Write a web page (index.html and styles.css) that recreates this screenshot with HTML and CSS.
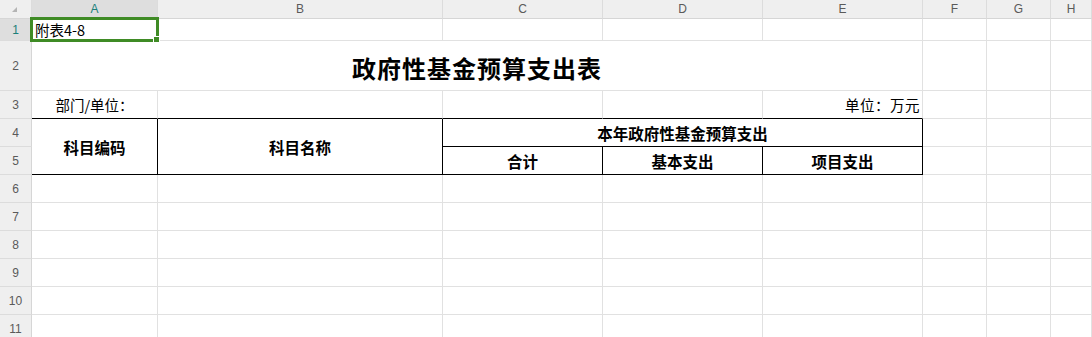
FILE: index.html
```html
<!DOCTYPE html>
<html lang="zh-CN">
<head>
  <meta charset="UTF-8" />
  <title>政府性基金预算支出表</title>
  <link rel="stylesheet" href="styles.css">
</head>
<body>
  <div class="sheet">
    <div class="grid">
      <!-- column headers -->
      <div class="corner"><span class="tri"></span></div>
      <div class="colhead active">A</div>
      <div class="colhead">B</div>
      <div class="colhead">C</div>
      <div class="colhead">D</div>
      <div class="colhead">E</div>
      <div class="colhead">F</div>
      <div class="colhead">G</div>
      <div class="colhead">H</div>

      <!-- row 1 -->
      <div class="rowhead active">1</div>
      <div class="cell left">附表4-8</div>
      <div class="cell"></div><div class="cell"></div><div class="cell"></div><div class="cell"></div>
      <div class="cell"></div><div class="cell"></div><div class="cell"></div>

      <!-- row 2 -->
      <div class="rowhead">2</div>
      <div class="cell title span5">政府性基金预算支出表</div>
      <div class="cell"></div><div class="cell"></div><div class="cell"></div>

      <!-- row 3 -->
      <div class="rowhead">3</div>
      <div class="cell top-edge">部门/单位：</div>
      <div class="cell top-edge"></div>
      <div class="cell top-edge"></div>
      <div class="cell top-edge"></div>
      <div class="cell top-edge right">单位：万元</div>
      <div class="cell"></div><div class="cell"></div><div class="cell"></div>

      <!-- rows 4-5 : table head -->
      <div class="rowhead">4</div>
      <div class="cell th rows2">科目编码</div>
      <div class="cell th rows2">科目名称</div>
      <div class="cell th span3">本年政府性基金预算支出</div>
      <div class="cell"></div><div class="cell"></div><div class="cell"></div>

      <div class="rowhead">5</div>
      <div class="cell th">合计</div>
      <div class="cell th">基本支出</div>
      <div class="cell th">项目支出</div>
      <div class="cell"></div><div class="cell"></div><div class="cell"></div>

      <!-- empty rows -->
      <div class="rowhead">6</div>
      <div class="cell"></div><div class="cell"></div><div class="cell"></div><div class="cell"></div>
      <div class="cell"></div><div class="cell"></div><div class="cell"></div><div class="cell"></div>
      <div class="rowhead">7</div>
      <div class="cell"></div><div class="cell"></div><div class="cell"></div><div class="cell"></div>
      <div class="cell"></div><div class="cell"></div><div class="cell"></div><div class="cell"></div>
      <div class="rowhead">8</div>
      <div class="cell"></div><div class="cell"></div><div class="cell"></div><div class="cell"></div>
      <div class="cell"></div><div class="cell"></div><div class="cell"></div><div class="cell"></div>
      <div class="rowhead">9</div>
      <div class="cell"></div><div class="cell"></div><div class="cell"></div><div class="cell"></div>
      <div class="cell"></div><div class="cell"></div><div class="cell"></div><div class="cell"></div>
      <div class="rowhead">10</div>
      <div class="cell"></div><div class="cell"></div><div class="cell"></div><div class="cell"></div>
      <div class="cell"></div><div class="cell"></div><div class="cell"></div><div class="cell"></div>
      <div class="rowhead">11</div>
      <div class="cell"></div><div class="cell"></div><div class="cell"></div><div class="cell"></div>
      <div class="cell"></div><div class="cell"></div><div class="cell"></div><div class="cell"></div>
    </div>

    <!-- selection of A1 -->
    <div class="selection"><span class="handle"></span></div>
  </div>
</body>
</html>
```

FILE: styles.css
```css
body {
  margin: 0;
  background: #fff;
  overflow: hidden;
  font-family: "Noto Sans CJK SC", "Liberation Sans", sans-serif;
  color: #000;
}
.sheet {
  position: relative;
  width: 1092px;
  height: 337px;
  overflow: hidden;
}
.grid {
  display: grid;
  grid-template-columns: 32px 126px 285px 160px 160px 160px 64px 64px 1fr;
  grid-template-rows: 19px 22px 50px repeat(9, 28px);
}
.grid > div {
  box-sizing: border-box;
  border-right: 1px solid #e1e1e1;
  border-bottom: 1px solid #e1e1e1;
  display: flex;
  align-items: center;
  justify-content: center;
  white-space: nowrap;
  overflow: hidden;
}
.corner,
.colhead,
.rowhead {
  background: #efefef;
  font-family: "Liberation Sans", Arial, sans-serif;
  font-size: 12px;
  color: #5a5a5a;
}
.grid > .corner,
.grid > .colhead {
  border-right-color: #dcdcdc;
  border-bottom-color: #d6d6d6;
}
.grid > .rowhead {
  border-right-color: #d6d6d6;
  border-bottom-color: #dcdcdc;
}
.grid > .rowhead:last-child {
  align-items: flex-start;
  padding-top: 7px;
}
.corner {
  position: relative;
}
.tri {
  position: absolute;
  left: 12px;
  top: 7px;
  width: 0;
  height: 0;
  border-left: 5px solid transparent;
  border-bottom: 5px solid #b4b4b4;
}
.active {
  background: #dedede;
  color: #1b7f7a;
}
.cell {
  font-size: 14.5px;
}
.cell.left {
  justify-content: flex-start;
  padding-left: 3px;
}
.cell.right {
  justify-content: flex-end;
  padding-right: 2px;
  letter-spacing: 0.5px;
}
.span5 {
  grid-column: span 5;
}
.span3 {
  grid-column: span 3;
}
.rows2 {
  grid-row: span 2;
}
.title {
  font-size: 24px;
  font-weight: 700;
  letter-spacing: 1px;
  padding-top: 4px;
}
.grid > .top-edge {
  border-bottom-color: #000;
}
.grid > .th {
  border-right-color: #000;
  border-bottom-color: #000;
  font-size: 15.5px;
  font-weight: 700;
}
.selection {
  position: absolute;
  left: 30px;
  top: 17px;
  width: 129px;
  height: 25px;
  box-sizing: border-box;
  border: 3px solid #3f8b25;
}
.handle {
  position: absolute;
  right: -4px;
  bottom: -4px;
  width: 5px;
  height: 5px;
  background: #3f8b25;
  border: 1px solid #fff;
}
```
